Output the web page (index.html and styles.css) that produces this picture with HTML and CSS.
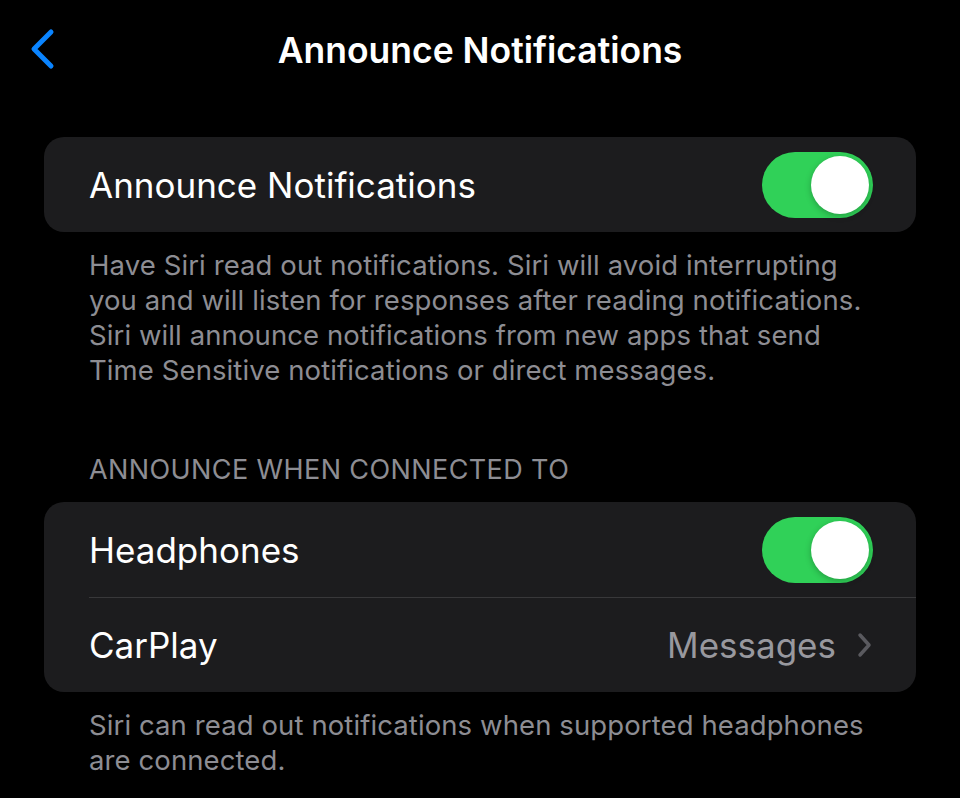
FILE: index.html
```html
<!DOCTYPE html>
<html lang="en">
<head>
    <meta charset="UTF-8">
    <meta name="viewport" content="width=device-width, initial-scale=1.0">
    <title>Announce Notifications</title>
    <link rel="stylesheet" href="styles.css">
</head>
<body>
    <div class="nav-bar">
        <button class="back" aria-label="Back">
            <svg width="30" height="44" viewBox="0 0 30 44">
                <path d="M22 4 L5 21 L22 38" fill="none" stroke="#0a84ff" stroke-width="5" stroke-linecap="round" stroke-linejoin="round"/>
            </svg>
        </button>
        <h1 class="title">Announce Notifications</h1>
    </div>

    <div class="content">
        <div class="group">
            <div class="row">
                <span class="label">Announce Notifications</span>
                <span class="switch on"><span class="knob"></span></span>
            </div>
        </div>
        <p class="footer">Have Siri read out notifications. Siri will avoid interrupting you and will listen for responses after reading notifications. Siri will announce notifications from new apps that send Time Sensitive notifications or direct messages.</p>

        <div class="section-header">ANNOUNCE WHEN CONNECTED TO</div>
        <div class="group">
            <div class="row">
                <span class="label">Headphones</span>
                <span class="switch on"><span class="knob"></span></span>
            </div>
            <div class="row link">
                <span class="label">CarPlay</span>
                <span class="detail">Messages</span>
                <svg class="chevron" width="16" height="26" viewBox="0 0 16 26">
                    <path d="M3 3 L12 13 L3 23" fill="none" stroke="#5a5a5f" stroke-width="3.5" stroke-linecap="round" stroke-linejoin="round"/>
                </svg>
            </div>
        </div>
        <p class="footer">Siri can read out notifications when supported headphones are connected.</p>
    </div>
</body>
</html>
```

FILE: styles.css
```css
body {
    margin: 0;
    background: #000;
    color: #fff;
    font-family: Inter, "Noto Sans", sans-serif;
    -webkit-font-smoothing: antialiased;
}

.nav-bar {
    position: relative;
    height: 100px;
    display: flex;
    align-items: center;
    justify-content: center;
}

.back {
    position: absolute;
    left: 29px;
    top: 28px;
    background: none;
    border: none;
    padding: 0;
    display: flex;
}

.title {
    margin: 0;
    font-size: 35.5px;
    font-weight: 600;
}

.content {
    padding: 37px 44px 0;
}

.group {
    background: #1c1c1e;
    border-radius: 20px;
    overflow: hidden;
}

.row {
    height: 95px;
    display: flex;
    align-items: center;
    padding: 0 43px 0 45px;
    position: relative;
}

/* hairline between rows, inset to the label */
.row + .row::before {
    content: "";
    position: absolute;
    top: 0;
    left: 45px;
    right: 0;
    height: 1px;
    background: #38383a;
}

.label {
    flex: 1;
    font-size: 35px;
}

.switch {
    width: 111px;
    height: 66px;
    border-radius: 33px;
    background: #39393d;
    display: flex;
    align-items: center;
    padding: 0 4px;
    box-sizing: border-box;
}

.switch.on {
    background: #30d158;
    justify-content: flex-end;
}

.knob {
    width: 58px;
    height: 58px;
    border-radius: 50%;
    background: #fff;
    box-shadow: 0 2px 6px rgba(0, 0, 0, 0.25);
}

.detail {
    font-size: 35px;
    color: #98989e;
    margin-right: 21px;
}

.chevron {
    display: block;
}

.footer {
    margin: 0;
    padding: 16px 45px 0;
    font-size: 27.5px;
    line-height: 35px;
    color: #8d8d93;
    letter-spacing: 0.1px;
}

.section-header {
    margin-top: 65px;
    padding: 0 45px 16px;
    font-size: 27px;
    color: #8d8d93;
    letter-spacing: 0.4px;
}
```
